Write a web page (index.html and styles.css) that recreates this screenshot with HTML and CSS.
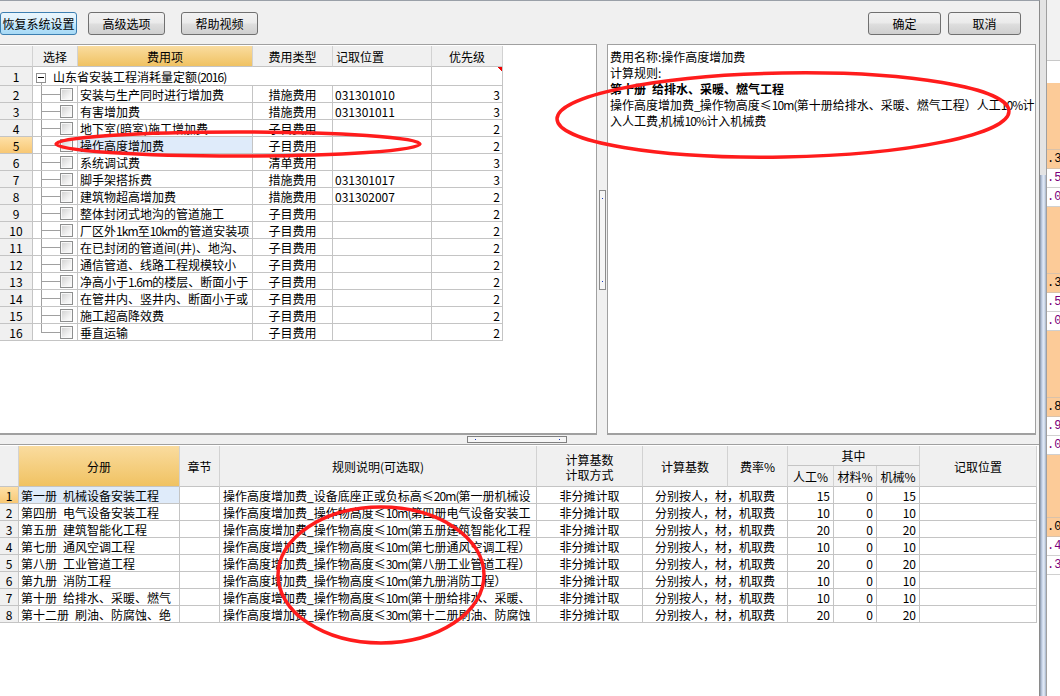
FILE: index.html
```html
<!DOCTYPE html>
<html lang="zh-CN">
<head>
<meta charset="utf-8">
<title>费用设置</title>
<link rel="stylesheet" href="styles.css">
</head>
<body>
<div class="screen">
  <div class="dialog">
    <div class="toolbar">
      <button class="btn btn-focus">恢复系统设置</button>
      <button class="btn btn-2">高级选项</button>
      <button class="btn btn-3">帮助视频</button>
      <button class="btn btn-ok">确定</button>
      <button class="btn btn-cancel">取消</button>
    </div>
    <div class="upper">
      <div class="left-pane">
        <table class="grid tgrid">
          <colgroup><col class="w33"><col class="w45"><col class="w175"><col class="w80"><col class="w99"><col class="w71"></colgroup>
          <thead>
            <tr class="hrow"><th></th><th>选择</th><th class="hot">费用项</th><th>费用类型</th><th class="hl">记取位置</th><th>优先级</th></tr>
          </thead>
          <tbody>
            <tr class="r1"><td class="num">1</td><td class="root" colspan="4"><span class="minus"></span>山东省安装工程消耗量定额<span class="lat">(2016)</span></td><td class="pri flag"></td></tr>
            <tr><td class="num">2</td><td class="sel"><span class="cb"></span></td><td class="item">安装与生产同时进行增加费</td><td class="type">措施费用</td><td class="pos">031301010</td><td class="pri">3</td></tr>
            <tr><td class="num">3</td><td class="sel"><span class="cb"></span></td><td class="item">有害增加费</td><td class="type">措施费用</td><td class="pos">031301011</td><td class="pri">3</td></tr>
            <tr><td class="num">4</td><td class="sel"><span class="cb"></span></td><td class="item">地下室(暗室)施工增加费</td><td class="type">子目费用</td><td class="pos"></td><td class="pri">2</td></tr>
            <tr><td class="num cur">5</td><td class="sel"><span class="cb"></span></td><td class="item cur">操作高度增加费</td><td class="type">子目费用</td><td class="pos"></td><td class="pri">2</td></tr>
            <tr><td class="num">6</td><td class="sel"><span class="cb"></span></td><td class="item">系统调试费</td><td class="type">清单费用</td><td class="pos"></td><td class="pri">3</td></tr>
            <tr><td class="num">7</td><td class="sel"><span class="cb"></span></td><td class="item">脚手架搭拆费</td><td class="type">措施费用</td><td class="pos">031301017</td><td class="pri">3</td></tr>
            <tr><td class="num">8</td><td class="sel"><span class="cb"></span></td><td class="item">建筑物超高增加费</td><td class="type">措施费用</td><td class="pos">031302007</td><td class="pri">2</td></tr>
            <tr><td class="num">9</td><td class="sel"><span class="cb"></span></td><td class="item">整体封闭式地沟的管道施工</td><td class="type">子目费用</td><td class="pos"></td><td class="pri">2</td></tr>
            <tr><td class="num">10</td><td class="sel"><span class="cb"></span></td><td class="item">厂区外<span class="lat">1km</span>至<span class="lat">10km</span>的管道安装项</td><td class="type">子目费用</td><td class="pos"></td><td class="pri">2</td></tr>
            <tr><td class="num">11</td><td class="sel"><span class="cb"></span></td><td class="item">在已封闭的管道间(井)、地沟、</td><td class="type">子目费用</td><td class="pos"></td><td class="pri">2</td></tr>
            <tr><td class="num">12</td><td class="sel"><span class="cb"></span></td><td class="item">通信管道、线路工程规模较小</td><td class="type">子目费用</td><td class="pos"></td><td class="pri">2</td></tr>
            <tr><td class="num">13</td><td class="sel"><span class="cb"></span></td><td class="item">净高小于<span class="lat">1.6m</span>的楼层、断面小于</td><td class="type">子目费用</td><td class="pos"></td><td class="pri">2</td></tr>
            <tr><td class="num">14</td><td class="sel"><span class="cb"></span></td><td class="item">在管井内、竖井内、断面小于或</td><td class="type">子目费用</td><td class="pos"></td><td class="pri">2</td></tr>
            <tr><td class="num">15</td><td class="sel"><span class="cb"></span></td><td class="item">施工超高降效费</td><td class="type">子目费用</td><td class="pos"></td><td class="pri">2</td></tr>
            <tr><td class="num">16</td><td class="sel last"><span class="cb"></span></td><td class="item">垂直运输</td><td class="type">子目费用</td><td class="pos"></td><td class="pri">2</td></tr>
          </tbody>
        </table>
      </div>
      <div class="vsplit"><div class="vhandle"></div></div>
      <div class="right-pane">
        <div>费用名称:操作高度增加费</div>
        <div>计算规则:</div>
        <div class="strong">第十册&ensp;给排水、采暖、燃气工程</div>
        <div>操作高度增加费<span class="lat">_</span>操作物高度≤<span class="lat">10m(</span>第十册给排水、采暖、燃气工程）人工<span class="lat">10%</span>计</div>
        <div>入人工费<span class="lat">,</span>机械<span class="lat">10%</span>计入机械费</div>
      </div>
    </div>
    <div class="hsplit"><div class="hhandle"></div></div>
    <div class="lower">
      <table class="grid bgrid">
        <colgroup><col class="w19"><col class="w161"><col class="w40"><col class="w317"><col class="w106"><col class="w85"><col class="w60"><col class="w46"><col class="w43"><col class="w43"><col class="w117"></colgroup>
        <thead>
          <tr class="h1">
            <th rowspan="2"></th>
            <th rowspan="2" class="hot">分册</th>
            <th rowspan="2">章节</th>
            <th rowspan="2">规则说明(可选取)</th>
            <th rowspan="2"><span class="two">计算基数<br>计取方式</span></th>
            <th rowspan="2">计算基数</th>
            <th rowspan="2">费率%</th>
            <th colspan="3">其中</th>
            <th rowspan="2">记取位置</th>
          </tr>
          <tr class="h2"><th>人工%</th><th>材料%</th><th>机械%</th></tr>
        </thead>
        <tbody>
          <tr><td class="num cur">1</td><td class="vol cur">第一册&ensp;机械设备安装工程</td><td></td><td class="rule">操作高度增加费_设备底座正或负标高≤<span class="lat">20m(</span>第一册机械设</td><td class="mode">非分摊计取</td><td class="base" colspan="2">分别按人，材，机取费</td><td class="n">15</td><td class="n">0</td><td class="n">15</td><td></td></tr>
          <tr><td class="num">2</td><td class="vol">第四册&ensp;电气设备安装工程</td><td></td><td class="rule">操作高度增加费_操作物高度≤<span class="lat">10m(</span>第四册电气设备安装工</td><td class="mode">非分摊计取</td><td class="base" colspan="2">分别按人，材，机取费</td><td class="n">10</td><td class="n">0</td><td class="n">10</td><td></td></tr>
          <tr><td class="num">3</td><td class="vol">第五册&ensp;建筑智能化工程</td><td></td><td class="rule">操作高度增加费_操作物高度≤<span class="lat">10m(</span>第五册建筑智能化工程</td><td class="mode">非分摊计取</td><td class="base" colspan="2">分别按人，材，机取费</td><td class="n">20</td><td class="n">0</td><td class="n">20</td><td></td></tr>
          <tr><td class="num">4</td><td class="vol">第七册&ensp;通风空调工程</td><td></td><td class="rule">操作高度增加费_操作物高度≤<span class="lat">10m(</span>第七册通风空调工程）</td><td class="mode">非分摊计取</td><td class="base" colspan="2">分别按人，材，机取费</td><td class="n">10</td><td class="n">0</td><td class="n">10</td><td></td></tr>
          <tr><td class="num">5</td><td class="vol">第八册&ensp;工业管道工程</td><td></td><td class="rule">操作高度增加费_操作物高度≤<span class="lat">30m(</span>第八册工业管道工程）</td><td class="mode">非分摊计取</td><td class="base" colspan="2">分别按人，材，机取费</td><td class="n">20</td><td class="n">0</td><td class="n">20</td><td></td></tr>
          <tr><td class="num">6</td><td class="vol">第九册&ensp;消防工程</td><td></td><td class="rule">操作高度增加费_操作物高度≤<span class="lat">10m(</span>第九册消防工程）</td><td class="mode">非分摊计取</td><td class="base" colspan="2">分别按人，材，机取费</td><td class="n">10</td><td class="n">0</td><td class="n">10</td><td></td></tr>
          <tr><td class="num">7</td><td class="vol">第十册&ensp;给排水、采暖、燃气</td><td></td><td class="rule">操作高度增加费_操作物高度≤<span class="lat">10m(</span>第十册给排水、采暖、</td><td class="mode">非分摊计取</td><td class="base" colspan="2">分别按人，材，机取费</td><td class="n">10</td><td class="n">0</td><td class="n">10</td><td></td></tr>
          <tr><td class="num">8</td><td class="vol">第十二册&ensp;刷油、防腐蚀、绝</td><td></td><td class="rule">操作高度增加费_操作物高度≤<span class="lat">30m(</span>第十二册刷油、防腐蚀</td><td class="mode">非分摊计取</td><td class="base" colspan="2">分别按人，材，机取费</td><td class="n">20</td><td class="n">0</td><td class="n">20</td><td></td></tr>
        </tbody>
      </table>
    </div>
  </div>
  <div class="frame"></div>
  <div class="bgapp">
    <div class="bg-head"></div>
    <div class="bg-gap"></div>
    <div class="pk tall"></div>
    <div class="pk cell">.3</div>
    <div class="wt cell">.5</div>
    <div class="wt cell">.0</div>
    <div class="pk tall"></div>
    <div class="pk cell">.3</div>
    <div class="wt cell">.5</div>
    <div class="wt cell">.0</div>
    <div class="pk tall"></div>
    <div class="pk cell">.8</div>
    <div class="wt cell">.9</div>
    <div class="wt cell">.0</div>
    <div class="pk tall2"></div>
    <div class="pk cell">.0</div>
    <div class="wt cell">.4</div>
    <div class="wt cell">.3</div>
    <div class="bg-rest"></div>
  </div>
  <svg class="marks" width="1060" height="696" viewBox="0 0 1060 696">
    <ellipse cx="238" cy="144" rx="182" ry="12"/>
    <ellipse cx="783" cy="115" rx="226" ry="42" transform="rotate(-1 783 115)"/>
    <ellipse cx="381" cy="575" rx="103" ry="68"/>
  </svg>
</div>
</body>
</html>
```

FILE: styles.css
```css
* { box-sizing: border-box; margin: 0; padding: 0; }
html, body { width: 1060px; height: 696px; overflow: hidden; background: #fff; }
body {
  font-family: "Noto Sans CJK SC", "Liberation Sans", sans-serif;
  font-size: 12px;
  line-height: 15px;
  color: #000;
}
.screen { position: relative; display: flex; width: 1060px; height: 696px; }
.lat { letter-spacing: -0.9px; }

/* dialog */
.dialog {
  flex: none;
  width: 1040px;
  height: 696px;
  display: flex;
  flex-direction: column;
  background: #f0f0f0;
  border-top: 1px solid #9aa0a8;
  border-right: 1px solid #8a8a8a;
}
.toolbar { flex: none; height: 43px; display: flex; align-items: flex-start; padding-top: 11px; }
.btn {
  flex: none;
  width: 77px;
  height: 23px;
  border: 1px solid #707070;
  border-radius: 3px;
  background: linear-gradient(#f2f2f2, #ebebeb 45%, #dddddd 55%, #cfcfcf);
  font-family: inherit;
  font-size: 12px;
  line-height: 15px;
  color: #000;
  display: flex;
  align-items: center;
  justify-content: center;
}
.btn-focus { border-color: #3c7fb1; background: linear-gradient(#eaf6fd, #d9f0fc 45%, #bee6fd 55%, #a7d9f5); }
.btn-2 { margin-left: 11px; }
.btn-3 { margin-left: 16px; }
.btn-ok { margin-left: auto; width: 73px; }
.btn-cancel { margin-left: 7px; width: 73px; margin-right: 18px; }

/* upper panes */
.upper { flex: none; height: 391px; display: flex; }
.left-pane {
  flex: none;
  width: 597px;
  background: #fff;
  border-top: 1px solid #a0a0a0;
  border-right: 1px solid #a0a0a0;
  border-bottom: 2px solid #a0a0a0;
  padding-top: 1px;
  overflow: hidden;
}
.vsplit { flex: none; width: 10px; display: flex; align-items: center; padding-left: 2px; }
.vhandle {
  width: 7px;
  height: 100px;
  border: 1px solid #8c8c8c;
  background:
    linear-gradient(#1c3cc0, #1c3cc0) no-repeat 2px 7px / 1px 1px,
    linear-gradient(#1c3cc0, #1c3cc0) no-repeat 2px 90px / 1px 1px,
    #f6f6f6;
}
.right-pane {
  flex: none;
  width: 429px;
  background: #fff;
  border: 1px solid #a0a0a0;
  border-bottom-width: 2px;
  padding: 4px 2px;
  line-height: 16px;
  white-space: nowrap;
  overflow: hidden;
}
.strong { font-weight: bold; }

.hsplit { flex: none; height: 9px; display: flex; align-items: center; padding-left: 467px; }
.hhandle {
  width: 100px;
  height: 7px;
  border: 1px solid #808080;
  background:
    linear-gradient(#1c3cc0, #1c3cc0) no-repeat 7px 2px / 1px 1px,
    linear-gradient(#1c3cc0, #1c3cc0) no-repeat 91px 2px / 1px 1px,
    #f6f6f6;
}

.lower { flex: 1; background: #fff; border-top: 1px solid #a0a0a0; padding-top: 1px; overflow: hidden; }

/* grids */
.grid { border-collapse: separate; border-spacing: 0; table-layout: fixed; }
.grid th, .grid td {
  border-right: 1px solid #c4c4c4;
  border-bottom: 1px solid #c4c4c4;
  padding: 0 3px;
  white-space: nowrap;
  overflow: hidden;
  font-weight: normal;
  text-align: left;
  vertical-align: middle;
  line-height: 15px;
}
.grid th { background: #f0f0f0; text-align: center; border-right-color: #d2d2d2; }
.grid th.hot { background: linear-gradient(#fadc9f, #f0c262); }
.grid th.hl { text-align: left; padding-left: 3px; }

.w19 { width: 19px; } .w33 { width: 33px; } .w40 { width: 40px; } .w43 { width: 43px; }
.w45 { width: 45px; } .w46 { width: 46px; } .w60 { width: 60px; } .w71 { width: 71px; }
.w80 { width: 80px; } .w85 { width: 85px; } .w99 { width: 99px; } .w106 { width: 106px; }
.w117 { width: 117px; } .w161 { width: 161px; } .w175 { width: 175px; } .w317 { width: 317px; }

.tgrid { width: 503px; }
.tgrid tr { height: 17px; }
.tgrid .hrow { height: 21px; }
.tgrid .r1 { height: 19px; }

.num { background: #f0f0f0; text-align: center !important; padding: 0 !important; }
.num.cur { background: linear-gradient(#fee0a6, #f8c874); }
.item { padding-left: 2px !important; }
.cur.item, .cur.vol { background: #dfebfa; }
.type { text-align: center !important; }
.pos { padding-left: 2px !important; }
.pri { text-align: right !important; padding-right: 2px !important; }
.flag { background: linear-gradient(to bottom left, #f00000 50%, transparent 50%) no-repeat right top / 5px 5px; }

.root {
  padding-left: 3px !important;
  background: linear-gradient(#a0a0a0, #a0a0a0) no-repeat 8px 100% / 1px 3px;
}
.minus {
  display: inline-block;
  width: 10px;
  height: 10px;
  border: 1px solid #919191;
  background: #fff linear-gradient(#000, #000) no-repeat center / 6px 1px;
  vertical-align: -1px;
  margin-right: 7px;
}
.sel {
  padding: 0 !important;
  background:
    linear-gradient(#a0a0a0, #a0a0a0) no-repeat 8px 0 / 1px 100%,
    linear-gradient(#a0a0a0, #a0a0a0) no-repeat 8px 50% / 19px 1px;
}
.sel.last {
  background:
    linear-gradient(#a0a0a0, #a0a0a0) no-repeat 8px 0 / 1px 50%,
    linear-gradient(#a0a0a0, #a0a0a0) no-repeat 8px 50% / 19px 1px;
}
.cb {
  display: block;
  width: 13px;
  height: 13px;
  margin-left: 27px;
  border: 1px solid #8e8f8f;
  background: linear-gradient(135deg, #cfcfcf, #f2f2f2 65%, #ffffff);
  box-shadow: inset 0 0 0 1px #f8f8f8;
}

.bgrid { width: 1037px; }
.bgrid .h1 { height: 20px; }
.bgrid .h2 { height: 21px; }
.bgrid tbody tr { height: 17px; }
.two { display: inline-block; line-height: 15px; padding-top: 1px; }
.vol { padding-left: 2px !important; }
.rule { padding-left: 3px !important; }
.mode, .base { text-align: center !important; }
.n { text-align: right !important; padding-right: 3px !important; }

/* background window strip */
.frame {
  flex: none;
  width: 6px;
  background:
    linear-gradient(#e4e4e4, #e4e4e4) no-repeat 0 0 / 100% 175px,
    linear-gradient(90deg, #8996a8, #c8d5ea 35%, #e4ecf7 65%, #a3b2c8);
}
.bgapp {
  flex: none;
  width: 14px;
  border-left: 1px solid #a0a0a0;
  display: flex;
  flex-direction: column;
  font-family: "Liberation Mono", monospace;
  font-size: 12px;
  line-height: 18px;
  overflow: hidden;
  white-space: nowrap;
  background: #fff;
}
.bg-head { flex: none; height: 61px; background: #f2f2f2; border-bottom: 1px solid #c8c8c8; }
.bg-gap { flex: none; height: 22px; background: #fff; }
.pk { flex: none; background: #fccb98; border-bottom: 1px solid #d9c2aa; color: #000; }
.wt { flex: none; background: #fff; border-bottom: 1px solid #d0d0d0; color: #7a007a; }
.tall { height: 67px; }
.tall2 { height: 63px; }
.cell { height: 19px; }
.bg-rest { flex: 1; background: #fff; }

/* annotation marks */
.marks { position: absolute; left: 0; top: 0; pointer-events: none; }
.marks ellipse { fill: none; stroke: #ff1c1c; stroke-width: 3.5; }
```
